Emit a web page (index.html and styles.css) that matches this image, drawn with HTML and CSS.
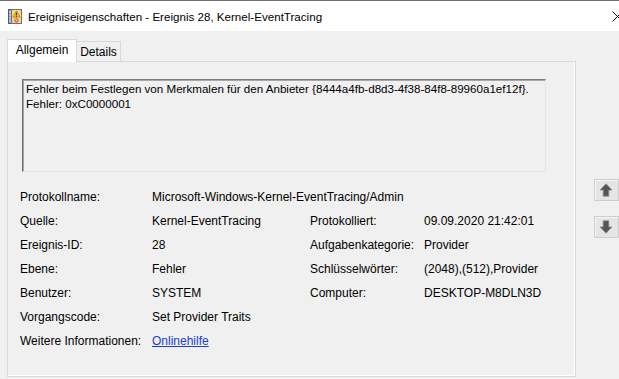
FILE: index.html
```html
<!DOCTYPE html>
<html>
    <head>
        <meta charset="utf-8">
        <title>Ereigniseigenschaften</title>
        <link rel="stylesheet" href="styles.css">
    </head>
    <body>
        <div class="titlebar">
            <svg class="appicon" width="14" height="15" viewBox="0 0 14 15">
                <rect x="0.5" y="0.5" width="3" height="14" fill="#9aa3c6" stroke="#4d5a8c"/>
                <rect x="3.5" y="0.5" width="10" height="14" fill="#f4dc7a" stroke="#6a6f86"/>
                <path d="M8.5 1.8 L12.3 8.2 H4.7 Z" fill="#e9b72c" stroke="#a07a16" stroke-width="0.6"/>
                <rect x="8" y="3.6" width="1" height="2.6" fill="#333"/>
                <rect x="8" y="6.8" width="1" height="0.9" fill="#333"/>
                <circle cx="8.5" cy="11.4" r="2.2" fill="#e0505e"/>
                <path d="M7.4 10.3 L9.6 12.5 M9.6 10.3 L7.4 12.5" stroke="#fff" stroke-width="0.7"/>
                <path d="M1.5 3 H3 M1.5 6 H3 M1.5 9 H3 M1.5 12 H3" stroke="#fff" stroke-width="1"/>
            </svg>
            <span class="title">Ereigniseigenschaften - Ereignis 28, Kernel-EventTracing</span>
            <svg class="close" width="11" height="11" viewBox="0 0 11 11">
                <path d="M0.5 0.5 L10.5 10.5 M10.5 0.5 L0.5 10.5" stroke="#111" stroke-width="1"/>
            </svg>
        </div>

        <div class="dialog">
            <div class="main">
                <div class="tabs">
                    <div class="tab active">Allgemein</div>
                    <div class="tab">Details</div>
                </div>
                <div class="panel">
                    <div class="message">Fehler beim Festlegen von Merkmalen für den Anbieter {8444a4fb-d8d3-4f38-84f8-89960a1ef12f}.<br>Fehler: 0xC0000001</div>

                    <div class="fields">
                        <div>Protokollname:</div>
                        <div class="wide">Microsoft-Windows-Kernel-EventTracing/Admin</div>

                        <div>Quelle:</div>
                        <div>Kernel-EventTracing</div>
                        <div>Protokolliert:</div>
                        <div>09.09.2020 21:42:01</div>

                        <div>Ereignis-ID:</div>
                        <div>28</div>
                        <div>Aufgabenkategorie:</div>
                        <div>Provider</div>

                        <div>Ebene:</div>
                        <div>Fehler</div>
                        <div>Schlüsselwörter:</div>
                        <div>(2048),(512),Provider</div>

                        <div>Benutzer:</div>
                        <div>SYSTEM</div>
                        <div>Computer:</div>
                        <div>DESKTOP-M8DLN3D</div>

                        <div>Vorgangscode:</div>
                        <div class="wide">Set Provider Traits</div>

                        <div>Weitere Informationen:</div>
                        <div class="wide"><a href="#">Onlinehilfe</a></div>
                    </div>
                </div>
            </div>

            <div class="side">
                <button class="nav">
                    <svg width="14" height="14" viewBox="0 0 14 14">
                        <path d="M7 0.8 L13 7 H9.8 V13.2 H4.2 V7 H1 Z" fill="#555" stroke="#8c8c8c" stroke-width="0.8"/>
                    </svg>
                </button>
                <button class="nav">
                    <svg width="14" height="14" viewBox="0 0 14 14">
                        <path d="M7 13.2 L13 7 H9.8 V0.8 H4.2 V7 H1 Z" fill="#555" stroke="#8c8c8c" stroke-width="0.8"/>
                    </svg>
                </button>
            </div>
        </div>
    </body>
</html>
```

FILE: styles.css
```css
*{
    box-sizing: border-box;
}
body{
    margin: 0;
    height: 379px;
    overflow: hidden;
    background: #f0f0f0;
    color: #000;
    font-family: "Liberation Sans", Arial, sans-serif;
    font-size: 12px;
}

/* barre de titre */
.titlebar{
    height: 31px;
    background: #fff;
    border-top: 1px solid #6e6e6e;
    display: flex;
    align-items: center;
    padding-left: 8px;
}
.appicon{
    display: block;
    margin-right: 6px;
}
.title{
    font-size: 11.6px;
    line-height: 15px;
    padding-top: 1px;
}
.close{
    display: block;
    margin-left: auto;
    margin-right: -4px;
    margin-top: 1px;
}

.dialog{
    display: flex;
}
.main{
    padding-left: 7px;
    width: 578px;
}

/* onglets */
.tabs{
    display: flex;
    align-items: flex-end;
    margin-top: 8px;
    margin-bottom: -1px;
    height: 23px;
}
.tab{
    border: 1px solid #d9d9d9;
    border-bottom: none;
    background: #f0f0f0;
    height: 20px;
    line-height: 15px;
    padding-top: 3px;
    text-align: center;
    margin-bottom: 1px;
}
.tab.active{
    position: relative;
    z-index: 1;
    background: #fff;
    width: 70px;
    height: 23px;
    padding-top: 3px;
    margin-bottom: 0;
}
.tab + .tab{
    width: 45px;
    margin-left: -1px;
}

.panel{
    height: 316px;
    border: 1px solid #d9d9d9;
    box-shadow: inset -1px -1px 0 #fff;
    background: #f0f0f0;
    padding: 17px 0 0 12px;
}

.message{
    margin-left: 2px;
    width: 524px;
    height: 93px;
    border: 1px solid #e3e3e3;
    border-top-color: #7a7a7a;
    border-left-color: #6a6a6a;
    box-shadow: inset 1px 1px 0 #a8a8a8;
    padding: 1px 2px 0 3px;
    font-size: 11.6px;
    line-height: 15px;
    white-space: nowrap;
    overflow: hidden;
}

.fields{
    margin-top: 13px;
    display: grid;
    grid-template-columns: 132px 158px 114px auto;
    grid-auto-rows: 24px;
    line-height: 24px;
    white-space: nowrap;
}
.fields .wide{
    grid-column: 2 / 5;
}
.fields a{
    color: #1641d4;
    text-decoration: underline;
}

/* boutons haut / bas */
.side{
    display: flex;
    flex-direction: column;
    gap: 15px;
    padding-top: 148px;
    margin-left: 18px;
}
.nav{
    width: 25px;
    height: 22px;
    padding: 0;
    border: 1px solid #cdcdcd;
    background: #e5e5e5;
    box-shadow: inset 1px 1px 0 #f6f6f6;
    display: flex;
    align-items: center;
    justify-content: center;
    padding-right: 1px;
}
.nav svg{
    display: block;
}
```
